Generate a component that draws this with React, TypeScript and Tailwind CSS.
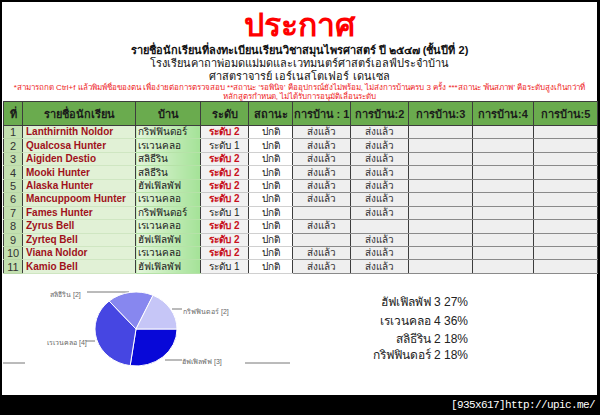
import React from 'react';

type Row = {
  no: number;
  name: string;
  house: string;
  level: 1 | 2;
  hw: string[];
};

const rows: Row[] = [
  { no: 1, name: 'Lanthirnith Noldor', house: 'กริฟฟินดอร์', level: 2, hw: ['ส่งแล้ว', 'ส่งแล้ว'] },
  { no: 2, name: 'Qualcosa Hunter', house: 'เรเวนคลอ', level: 1, hw: ['ส่งแล้ว', 'ส่งแล้ว'] },
  { no: 3, name: 'Aigiden Destio', house: 'สลิธีริน', level: 2, hw: ['ส่งแล้ว', 'ส่งแล้ว'] },
  { no: 4, name: 'Mooki Hunter', house: 'สลิธีริน', level: 2, hw: ['ส่งแล้ว', 'ส่งแล้ว'] },
  { no: 5, name: 'Alaska Hunter', house: 'ฮัฟเฟิลพัฟ', level: 2, hw: ['ส่งแล้ว', 'ส่งแล้ว'] },
  { no: 6, name: 'Mancuppoom Hunter', house: 'เรเวนคลอ', level: 2, hw: ['ส่งแล้ว', 'ส่งแล้ว'] },
  { no: 7, name: 'Fames Hunter', house: 'กริฟฟินดอร์', level: 1, hw: ['', 'ส่งแล้ว'] },
  { no: 8, name: 'Zyrus Bell', house: 'เรเวนคลอ', level: 2, hw: ['ส่งแล้ว', ''] },
  { no: 9, name: 'Zyrteq Bell', house: 'ฮัฟเฟิลพัฟ', level: 2, hw: ['', 'ส่งแล้ว'] },
  { no: 10, name: 'Viana Noldor', house: 'เรเวนคลอ', level: 2, hw: ['ส่งแล้ว', 'ส่งแล้ว'] },
  { no: 11, name: 'Kamio Bell', house: 'ฮัฟเฟิลพัฟ', level: 1, hw: ['ส่งแล้ว', 'ส่งแล้ว'] },
];

const headers = ['ที่', 'รายชื่อนักเรียน', 'บ้าน', 'ระดับ', 'สถานะ', 'การบ้าน : 1', 'การบ้าน:2', 'การบ้าน:3', 'การบ้าน:4', 'การบ้าน:5'];
const widths = ['w-[19px]', 'w-[113px]', 'w-[65px]', 'w-[48px]', 'w-[44px]', 'w-[58px]', 'w-[58px]', 'w-[64px]', 'w-[61px]', 'w-[64px]'];

const legend = [
  { label: 'ฮัฟเฟิลพัฟ 3 27%', mt: 'mt-0' },
  { label: 'เรเวนคลอ 4 36%', mt: 'mt-[5px]' },
  { label: 'สลิธีริน 2 18%', mt: 'mt-[4px]' },
  { label: 'กริฟฟินดอร์ 2 18%', mt: 'mt-[2px]' },
];

// pie slices drawn on an ellipse, clockwise from 3 o'clock
const slices = [
  { value: 3, color: '#0808d8' },
  { value: 4, color: '#4646e2' },
  { value: 2, color: '#8787ef' },
  { value: 2, color: '#c6c6f7' },
];

function PieChart() {
  const cx = 134;
  const cy = 55;
  const rx = 41;
  const ry = 37;
  const total = slices.reduce((s, x) => s + x.value, 0);
  let start = 0;
  const paths = slices.map((s, i) => {
    const end = start + (s.value / total) * Math.PI * 2;
    const x0 = cx + rx * Math.cos(start);
    const y0 = cy + ry * Math.sin(start);
    const x1 = cx + rx * Math.cos(end);
    const y1 = cy + ry * Math.sin(end);
    const large = end - start > Math.PI ? 1 : 0;
    start = end;
    return (
      <path
        key={i}
        d={`M${cx} ${cy} L${x0} ${y0} A${rx} ${ry} 0 ${large} 1 ${x1} ${y1} Z`}
        fill={s.color}
        stroke="#ffffff"
        strokeWidth={1}
      />
    );
  });

  return (
    <svg width="298" height="121" viewBox="0 0 298 121">
      <g stroke="#777" strokeWidth="1" fill="none">
        <polyline points="85,18 127,18 129,22" />
        <polyline points="170,35 180,35" />
        <polyline points="84,67 93,67" />
        <polyline points="163,86 180,86" />
        <line x1="1" y1="89" x2="23" y2="89" />
        <line x1="243" y1="89" x2="288" y2="89" />
      </g>
      {paths}
      <g fill="#666" fontSize="7" fontFamily="'Liberation Sans', sans-serif">
        <text x="48" y="23">สลิธีริน [2]</text>
        <text x="181" y="40">กริฟฟินดอร์ [2]</text>
        <text x="45" y="71">เรเวนคลอ [4]</text>
        <text x="180" y="90">ฮัฟเฟิลพัฟ [3]</text>
      </g>
    </svg>
  );
}

export default function App() {
  return (
    <div className="w-[600px] h-[415px] bg-black flex flex-col font-['Liberation_Sans',sans-serif]">
      <div className="mt-[2px] ml-[2px] mr-[3px] h-[393px] bg-white flex flex-col">
        {/* heading */}
        <div className="flex flex-col items-center text-center">
          <h1 className="text-[32px] leading-[35px] font-bold text-[#ff0000] mt-[6px]">ประกาศ</h1>
          <p className="text-[11px] leading-[14px] font-bold text-[#111]">
            รายชื่อนักเรียนที่ลงทะเบียนเรียนวิชาสมุนไพรศาสตร์ ปี ๒๕๔๗ (ชั้นปีที่ 2)
          </p>
          <p className="text-[11px] leading-[13px] text-[#111]">
            โรงเรียนคาถาพ่อมดแม่มดและเวทมนตร์ศาสตร์เอลฟ์ประจำบ้าน
          </p>
          <p className="text-[11px] leading-[13px] text-[#111]">ศาสตราจารย์ เอร์เนสโตเฟอร์ เดนเซล</p>
          <p className="text-[8px] leading-[9px] text-[#ee1c25] px-[4px]">
            *สามารถกด Ctrl+f แล้วพิมพ์ชื่อของตน เพื่อง่ายต่อการตรวจสอบ **สถานะ 'รอพินิจ' คืออุปกรณ์ยังไม่พร้อม, ไม่ส่งการบ้านครบ 3 ครั้ง ***สถานะ 'พ้นสภาพ' คือระดับสูงเกินกว่าที่
            <br />
            หลักสูตรกำหนด, ไม่ได้รับการอนุมัติเลื่อนระดับ
          </p>
        </div>

        {/* table */}
        <table className="ml-[1px] w-[594px] border-collapse table-fixed">
          <thead>
            <tr className="h-[24px] bg-[#6aab4e]">
              {headers.map((h, i) => (
                <th
                  key={i}
                  className={`${widths[i]} border border-[#3d3d3d] p-0 font-bold text-[11px] leading-[12px] text-[#1b1b1b] text-center whitespace-nowrap overflow-hidden`}
                >
                  {h}
                </th>
              ))}
            </tr>
          </thead>
          <tbody>
            {rows.map((r) => (
              <tr key={r.no} className="h-[13.45px] leading-[12px]">
                <td className="border-x border-[#3d3d3d] border-b border-b-[#b9d6a8] bg-[#c3e0b0] text-center text-[#333] text-[11px] p-0">
                  {r.no}
                </td>
                <td className="border-x border-[#3d3d3d] border-b border-b-[#cfe6c2] bg-[#e1f1d6] text-[#a0111b] font-bold text-[10px] pl-[3px] p-0 whitespace-nowrap overflow-hidden">
                  {r.name}
                </td>
                <td className="border-x border-[#3d3d3d] border-b border-b-[#b6e2a8] bg-gradient-to-r from-[#e3f5da] to-[#a4e297] text-[#222] text-[10px] pl-[2px] p-0 whitespace-nowrap overflow-hidden">
                  {r.house}
                </td>
                <td
                  className={`border-x border-[#3d3d3d] border-b border-b-[#c8c8c8] bg-[#f2f2f2] text-center p-0 whitespace-nowrap text-[10px] ${
                    r.level === 2 ? 'text-[#c8101c] font-bold' : 'text-[#222]'
                  }`}
                >
                  ระดับ {r.level}
                </td>
                <td className="border-x border-[#3d3d3d] border-b border-b-[#d0d0d0] bg-white text-center text-[#222] text-[10px] p-0">
                  ปกติ
                </td>
                {[0, 1, 2, 3, 4].map((k) => (
                  <td
                    key={k}
                    className="border-x border-[#3d3d3d] border-b border-b-[#8a8a8a] bg-[#efefef] text-center text-[#333] text-[10px] p-0"
                  >
                    {r.hw[k] ?? ''}
                  </td>
                ))}
              </tr>
            ))}
          </tbody>
        </table>

        {/* chart + legend */}
        <div className="flex flex-1">
          <PieChart />
          <div className="w-[168px] flex flex-col items-end pt-[21px] text-[12px] leading-[14px] text-[#222]">
            {legend.map((l) => (
              <span key={l.label} className={l.mt}>
                {l.label}
              </span>
            ))}
          </div>
        </div>
      </div>

      {/* footer strip */}
      <div className="flex-1 flex items-center justify-end pr-[5px]">
        <span className="font-['Liberation_Mono',monospace] text-[11px] tracking-[-0.6px] text-white">
          [935x617]http://upic.me/
        </span>
      </div>
    </div>
  );
}
